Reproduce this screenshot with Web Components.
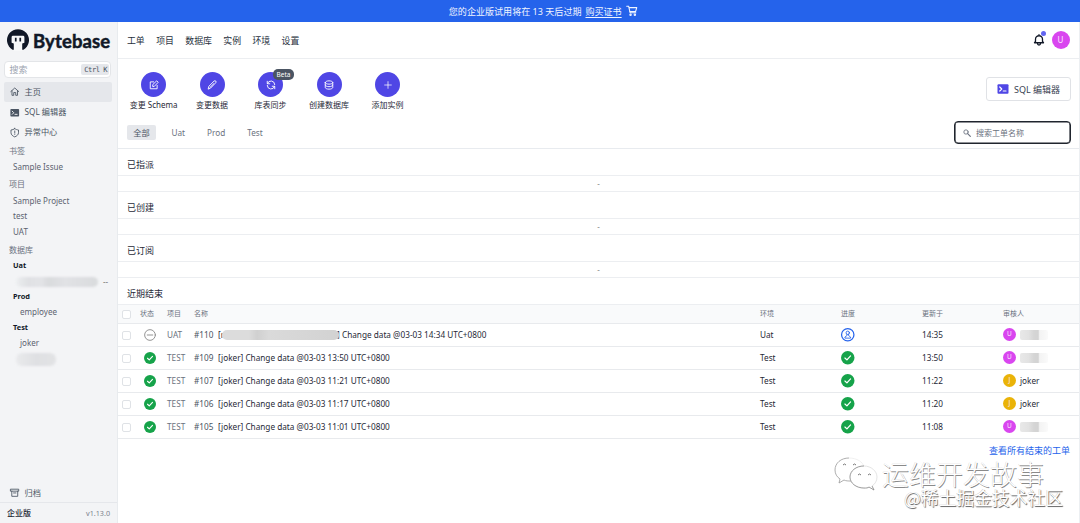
<!DOCTYPE html>
<html lang="zh"><head><meta charset="utf-8"><title>Bytebase</title>
<style>html,body{margin:0;width:1080px;height:523px;overflow:hidden;background:#fff;font-family:"Noto Sans","Noto Sans CJK SC",sans-serif}</style></head>
<body><bb-app></bb-app>
<script>
const ICONS={
 home:'<path d="M2 11.5 12 2.500l10 9M5 9.500V21h4.500v-7h5v7H19V9.500"/>',
 term:'<rect x="1" y="2.500" width="22" height="19" rx="2" fill="currentColor" stroke="none"/><path d="m5.500 8 4 4-4 4M12.500 16H18" stroke="var(--cut,#f3f4f6)" stroke-width="2.400"/>',
 shield:'<path d="M12 1.500c-3 2.500-6 3-9.500 3.500V12c0 5 4.500 8.500 9.500 10.500 5-2 9.500-5.500 9.500-10.500V5C18 4.500 15 4 12 1.500zM12 7.500v5M12 15.500v.7"/>',
 archive:'<path d="M2 3h20v5H2zM4.500 8v13h15V8M9 12.500h6"/>',
 cart:'<path d="M1.500 2.500H5.500L8.500 16h12M6 5.500h16.500l-2.500 8H7.500"/><circle cx="9.500" cy="20.500" r="1.500"/><circle cx="18.500" cy="20.500" r="1.500"/>',
 bell:'<path d="M15 17.500h6l-2-2.500V10.500a7 7 0 0 0-14 0V15l-2 2.500h12M9 17.500v1.500a3 3 0 0 0 6 0v-1.500M12 3.500V1.500"/>',
 edit:'<path d="M11 4.500H3V21h16.500v-8M9 15v-4l9.500-9L22 5.500 13 15z"/>',
 pencil:'<path d="m3 21 1.500-6L17 2.500c1-1 3-1 4 0s1 3 0 4L9 19zM16 9l-9 9"/>',
 sync:'<path d="M3 3v6h6M3.500 8.500A9 9 0 0 1 21 11M21 21v-6h-6M20.500 15.500A9 9 0 0 1 3 13"/>',
 db:'<path d="M3 6c0-2 4-4 9-4s9 2 9 4-4 4-9 4-9-2-9-4zv12c0 2 4 4 9 4s9-2 9-4V6M3 12c0 2 4 4 9 4s9-2 9-4"/>',
 plus:'<path d="M12 2v20M2 12h20"/>',
 search:'<circle cx="9" cy="9" r="6.500"/><path d="m14 14 8 8" stroke-width="3.500"/>',
 done:'<circle cx="12" cy="12" r="12" fill="currentColor" stroke="none"/><path d="m7 12.500 3.500 3.300L17 8.800" stroke="#fff"/>',
 skip:'<circle cx="12" cy="12" r="10.700" stroke-width="1.800"/><path d="M6.500 12h11" stroke-width="1.800"/>',
 user:'<circle cx="12" cy="12" r="11"/><circle cx="12" cy="8.500" r="3" stroke-width="1.500"/><path d="M10.500 11.500v2L7 16v2h10v-2l-3.500-2.500v-2" stroke-width="1.500"/>'
};
function define(name,html){
 const t=document.createElement('template');
 customElements.define(name,class extends HTMLElement{
  connectedCallback(){
   if(this.shadowRoot)return;
   t.innerHTML=typeof html==='function'?html(this):html;
   this.attachShadow({mode:'open'}).append(t.content.cloneNode(true));
  }});
}
const at=(e,n,d='')=>e.getAttribute(n)??d;
define('bb-icon',e=>`<style>:host{display:block;flex:none;width:${at(e,'s',10)}px;height:${at(e,'s',10)}px}svg{display:block;width:100%;height:100%;overflow:visible}</style><svg viewBox="0 0 24 24" fill="none" stroke="currentColor" stroke-width="${at(e,'w',2.2)}" stroke-linejoin="round" stroke-linecap="round">${ICONS[at(e,'n')]}</svg>`);
define('bb-banner',`<style>:host{height:22px;background:#2563eb;color:#f1f5ff;display:flex;align-items:center;justify-content:center;font-size:9.060px;gap:4px;padding-left:6px;box-sizing:border-box;white-space:pre}u{text-underline-offset:1.500px;text-decoration-thickness:1px}</style><span>您的企业版试用将在 13 天后过期</span><u>购买证书</u><bb-icon n="cart" s="11.500"></bb-icon>`);
define('bb-logo',`<style>:host{display:flex;align-items:center;height:36px;padding-left:7px;color:#111827;gap:4px}svg{width:22px;height:22px;flex:none}span{font:700 18.500px/24px Lato,sans-serif;letter-spacing:.12px;-webkit-text-stroke:.5px #111827;position:relative;top:.5px}</style>
<svg viewBox="0 0 22 22"><path d="M5.500 20.700A11 11 0 1 1 16.500 20.700z" fill="#111827"/><path d="M4.600 8.200Q4.600 6.800 6 6.800H16Q17.400 6.800 17.400 8.200V13.800L15.200 14.500V22H6.800V14.500L4.600 13.800z" fill="#f7f8f9"/><path d="M7.900 8.800h1.700V12.600H7.900zM12.400 8.800h1.700V12.600h-1.700z" fill="#111827"/></svg><span>Bytebase</span>`);
define('bb-search',`<style>:host{display:flex;box-sizing:border-box;margin:3px 6px 4px 4px;height:17px;border:1px solid #e3e5e8;border-radius:4px;background:#fff;align-items:center;padding:0 0 0 4.500px;justify-content:space-between;font-size:9px;color:#9ca3af}kbd{font:7.200px/11px "DejaVu Sans Mono",monospace;background:#e5e7eb;color:#4b5563;padding:0 2px 0 3px;border-radius:2px;margin-right:1px;letter-spacing:-.55px}</style><span>搜索</span><kbd>Ctrl K</kbd>`);
define('bb-nav',e=>`<style>:host{display:flex;align-items:center;height:20.200px;margin:0 5px 0 4px;padding-left:6px;gap:5px;border-radius:2px;font-size:8.200px;color:#4b5563;line-height:12px;${e.hasAttribute('on')?'background:#e5e7eb':''}}</style><bb-icon n="${at(e,'n')}" s="9.500"></bb-icon><slot></slot>`);
define('bb-head',`<style>:host{display:flex;align-items:center;height:18px;padding-left:9px;font-size:8px;color:#6b7280}</style><slot></slot>`);
define('bb-leaf',e=>`<style>:host{display:flex;align-items:center;height:15.700px;padding-left:${at(e,'in',13)}px;font-size:8.050px;color:#5b6370}:host([b]){font-weight:700;font-size:7.400px;color:#111827}</style><slot></slot>`);
define('bb-smudge',e=>`<style>:host{display:block;flex:none;width:${at(e,'w')}px;height:${at(e,'h',11)}px;border-radius:${at(e,'r',6)}px;background:linear-gradient(90deg,${at(e,'c','#e9eaec,#dfe0e3,#e2e3e5')});filter:blur(${at(e,'f','1')}px)}</style>`);
define('bb-side',`<style>:host{display:flex;flex-direction:column;width:118px;box-sizing:border-box;background:#f3f4f6;border-right:1px solid #e8ebee;height:501px}.sp{flex:1}.list{margin-top:-1px}.foot{display:flex;justify-content:space-between;align-items:center;border-top:1px solid #e5e7eb;height:20px;padding:0 7px;font-size:8px;line-height:18px;color:#1f2937;font-weight:500}.foot i{font:400 7.200px "Noto Sans";color:#7b828d}.blur{display:flex;align-items:center;height:16px;padding-left:16px;gap:5px;font-size:8px;color:#777}</style>
<bb-logo></bb-logo><bb-search></bb-search>
<bb-nav n="home" on>主页</bb-nav><bb-nav n="term">SQL 编辑器</bb-nav><bb-nav n="shield">异常中心</bb-nav>
<div class="list"><bb-head style="height:17px">书签</bb-head><bb-leaf>Sample Issue</bb-leaf>
<bb-head style="height:18.500px">项目</bb-head><bb-leaf style="height:15px">Sample Project</bb-leaf><bb-leaf>test</bb-leaf><bb-leaf>UAT</bb-leaf>
<bb-head style="height:20px">数据库</bb-head><bb-leaf b style="height:11px">Uat</bb-leaf>
<div class="blur" style="height:23px"><bb-smudge w="82" h="10" c="#eceef0,#e0e1e4 15%,#e3e4e7 30%,#d9dbdd 40%,#e1e2e5 60%,#d9dbdd"></bb-smudge><span>--</span></div>
<bb-leaf b style="height:6px">Prod</bb-leaf><bb-leaf in="20" style="height:24px">employee</bb-leaf><bb-leaf b style="height:8px">Test</bb-leaf><bb-leaf in="20" style="height:23px">joker</bb-leaf><div class="blur" style="height:10px"><bb-smudge w="40" h="13"></bb-smudge></div></div>
<div class="sp"></div><bb-nav n="archive" style="height:19px">归档</bb-nav><div class="foot"><span>企业版</span><i>v1.13.0</i></div>`);
define('bb-avatar',e=>`<style>:host{display:flex;flex:none;align-items:center;justify-content:center;border-radius:50%;width:${at(e,'s',13)}px;height:${at(e,'s',13)}px;background:${at(e,'c','#d946ef')};color:#fce7ff;font-size:${at(e,'f','6.5')}px;line-height:1}</style><slot></slot>`);
define('bb-top',`<style>:host{display:flex;align-items:center;height:36px;border-bottom:1px solid #eceef1;padding:0 9.500px 0 9px;font-size:9px;color:#27303d}nav{display:flex;gap:11.400px;flex:1;font-size:8.900px}.bell{position:relative;margin-right:7px;color:#111827}.bell i{position:absolute;width:5px;height:5px;border-radius:50%;background:#6366f1;right:-1.500px;top:-3px}</style><nav><span>工单</span><span>项目</span><span>数据库</span><span>实例</span><span>环境</span><span>设置</span></nav><div class="bell"><bb-icon n="bell" s="12" w="2.600"></bb-icon><i></i></div><bb-avatar s="18" f="8">U</bb-avatar>`);
define('bb-action',e=>`<style>:host{display:flex;flex-direction:column;align-items:center;width:58.500px;font-size:8px;color:#1f2937;white-space:nowrap;gap:2px;line-height:12px}.c{position:relative;width:25px;height:25px;border-radius:50%;background:#4f46e5;color:#fff;display:grid;place-items:center}.b{position:absolute;left:15px;top:-3px;background:#4b5563;border-radius:5px;color:#fff;font-size:6.500px;line-height:11px;padding:0 3.500px}</style><div class="c"><bb-icon n="${at(e,'n')}" s="${at(e,'s',10)}"></bb-icon>${e.hasAttribute('beta')?'<span class="b">Beta</span>':''}</div><slot></slot>`);
define('bb-actions',`<style>:host{display:flex;align-items:flex-start;height:54px;padding:13px 8px 0 6.300px;box-sizing:border-box}.g{flex:1}button{all:unset;box-sizing:border-box;display:flex;align-items:center;gap:5px;width:85px;height:24px;margin-top:5px;border:1px solid #e0e2e6;border-radius:3px;padding-left:10px;font-size:9px;color:#374151;--cut:#fff}button bb-icon{color:#4f46e5}</style><bb-action n="edit">变更 Schema</bb-action><bb-action n="pencil">变更数据</bb-action><bb-action n="sync" beta>库表同步</bb-action><bb-action n="db">创建数据库</bb-action><bb-action n="plus" s="8">添加实例</bb-action><div class="g"></div><button><bb-icon n="term" s="12"></bb-icon>SQL 编辑器</button>`);
define('bb-tabs',`<style>:host{display:flex;align-items:center;height:36px;box-sizing:border-box;border-bottom:1px solid #e8ebef;padding:4px 8px 0 9px;font-size:8.200px;color:#6b7280}.t{width:29px;text-align:center;background:#e5e7eb;border-radius:2px;line-height:15px;color:#4b5563}.u{margin-left:15.500px}.p,.e{margin-left:22px}.g{flex:1}label{display:flex;align-items:center;gap:5px;box-sizing:border-box;width:117px;height:23px;border:1px solid #20252e;border-radius:4px;padding-left:8px;font-size:8px;box-shadow:inset 0 0 0 .6px #20252e}</style><span class="t">全部</span><span class="u">Uat</span><span class="p">Prod</span><span class="e">Test</span><div class="g"></div><label><bb-icon n="search" s="8" w="2.600"></bb-icon>搜索工单名称</label>`);
define('bb-section',`<style>:host{display:block;height:43px;box-sizing:border-box;border-bottom:1px solid #eceef1}.t{height:27px;line-height:31px;box-sizing:border-box;border-bottom:1px solid #eceef1;padding-left:9px;font-size:9px;color:#1f2937;overflow:hidden}.d{line-height:16px;height:15px;text-align:center;font-size:8px;color:#888}</style><div class="t"><slot></slot></div><div class="d">-</div>`);
define('bb-row',e=>{const h=e.hasAttribute('head');return `<style>:host{display:grid;grid-template-columns:22px 27px 27px 566px 81px 81px 81px 1fr;align-items:center;height:${h?19:23}px;box-sizing:border-box;border-bottom:1px solid #e8eaed;font-size:${h?7:8.22}px;color:${h?'#6b7280':'#1f2937'};white-space:pre;line-height:12px;padding-bottom:1px;${h?'background:#f9fafb':''}}.k{width:9px;height:9px;box-sizing:border-box;border:1px solid #dfe2e6;border-radius:2px;margin-left:4px;background:#fff;position:relative;top:1px}.n,.r{display:flex;align-items:center}.g{color:#6b7280}.id{width:24px;color:#4b5563}.r{gap:4px}.ic{padding-left:4px;color:${at(e,'st')==='skip'?'#888':'#16a34a'}}.pr{color:${at(e,'st')==='skip'?'#2563eb':'#16a34a'}}</style><i class="k"></i>`+(h?`<span>状态</span><span>项目</span><span>名称</span><span>环境</span><span>进度</span><span>更新于</span><span>审核人</span>`:
`<span class="ic"><bb-icon n="${at(e,'st','done')}" s="12"></bb-icon></span><span class="g">${at(e,'p','TEST')}</span><span class="n"><span class="id">#${at(e,'id')}</span><slot></slot></span><span>${at(e,'env','Test')}</span><span class="pr"><bb-icon n="${e.hasAttribute('st')?'user':'done'}" s="13.500"></bb-icon></span><span>${at(e,'up')}</span><span class="r">${at(e,'who')==='j'?'<bb-avatar c="#eab308">J</bb-avatar>joker':'<bb-avatar>U</bb-avatar><bb-smudge w="28" h="10" r="2" f=".6" c="#e8e8e8,#e2e2e2 30%,#d5d5d5 50%,#d3d3d3 65%,#f3f3f3 70%,#fafafa"></bb-smudge>'}</span>`)});
define('bb-table',`<style>:host{display:block}.t{height:26px;line-height:31px;padding-left:9px;font-size:9px;color:#1f2937;border-bottom:1px solid #eceef1}.s{margin:0 -2px}</style><div class="t">近期结束</div><bb-row head></bb-row><bb-row id="110" st="skip" p="UAT" env="Uat" up="14:35">[r<bb-smudge class="s" w="117" h="10" f=".5" c="#dcdcdc,#dcdcdc 23%,#d0d0d0 30%,#dadada 40%,#d6d6d6 70%,#d2d2d2"></bb-smudge>] Change data @03-03 14:34 UTC+0800</bb-row><bb-row id="109" up="13:50">[joker] Change data @03-03 13:50 UTC+0800</bb-row><bb-row id="107" up="11:22" who="j">[joker] Change data @03-03 11:21 UTC+0800</bb-row><bb-row id="106" up="11:20" who="j">[joker] Change data @03-03 11:17 UTC+0800</bb-row><bb-row id="105" up="11:08">[joker] Change data @03-03 11:01 UTC+0800</bb-row>`);
define('bb-watermark',`<style>:host{position:absolute;right:0;top:455px;width:250px;height:62px;color:#fff;white-space:nowrap;font-family:"Noto Sans CJK SC",sans-serif}.a,.b{position:absolute;font-weight:300;text-shadow:.8px .8px .6px #8a8a8a,-.3px -.3px 0 #ccc}.a{left:52px;top:6px;font-size:27px;line-height:25px}.b{left:74px;top:33px;font-size:17.800px;line-height:18px;font-weight:400;text-shadow:.8px .8px .7px #666,-.3px -.3px 0 #bbb}svg{position:absolute;left:4px;top:2px}</style><svg width="44" height="36" viewBox="0 0 44 36" fill="#fff" stroke="#aaa" stroke-width=".8"><path d="M15 1C7 1 1 6 1 13c0 4 2 7 5 9l-1 4 5-3c2 1 4 1 7 1" stroke="#999"/><path d="M15 1C23 1 29 5 30 10" stroke="#ececec"/><path d="M30 9c-8 0-14 5-14 11s6 11 14 11c2 0 4 0 5-1l5 3-2-4c3-2 5-5 5-9 0-6-6-11-13-11z" stroke="#ddd"/><path d="M30 9c-8 0-14 5-14 11s6 11 14 11c2 0 4 0 5-1l5 3-2-4" stroke="#888"/><path d="M9 8q1.500-2 3 0M19 8q1.500-2 3 0M24 18q1.500-2 3 0M34 18q1.500-2 3 0" fill="none" stroke="#777" stroke-width="1"/></svg><span class="a">运维开发故事</span><span class="b">@稀土掘金技术社区</span>`);
define('bb-app',`<style>:host{display:block;position:relative;width:1080px;height:523px;overflow:hidden}.m{display:flex}main{flex:1;min-width:0;height:501px;box-sizing:border-box;border-right:1px solid #eceff2}.l{text-align:right;padding:4px 9px 0 0;font-size:9px;line-height:16px;color:#2563eb}</style><bb-banner></bb-banner><div class="m"><bb-side></bb-side><main><bb-top></bb-top><bb-actions></bb-actions><bb-tabs></bb-tabs><bb-section>已指派</bb-section><bb-section>已创建</bb-section><bb-section>已订阅</bb-section><bb-table></bb-table><div class="l">查看所有结束的工单</div></main></div><bb-watermark></bb-watermark>`);
</script></body></html>
